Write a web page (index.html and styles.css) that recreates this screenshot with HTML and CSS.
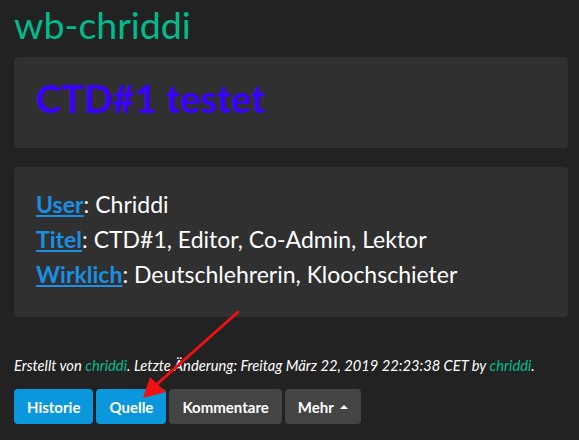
FILE: index.html
```html
<!DOCTYPE html>
<html lang="de">
  <head>
    <meta charset="UTF-8" />
    <meta name="viewport" content="width=device-width, initial-scale=1.0" />
    <title>wb-chriddi</title>
    <link rel="stylesheet" href="styles.css">
  </head>
  <body>
    <div class="page">
      <h2 class="site-title">wb-chriddi</h2>

      <div class="well">
        <h1 class="doc-title">CTD#1 testet</h1>
      </div>

      <div class="well info">
        <p class="line"><a href="#">User</a>: Chriddi</p>
        <p class="line"><a href="#">Titel</a>: CTD#1, Editor, Co-Admin, Lektor</p>
        <p class="line"><a href="#">Wirklich</a>: Deutschlehrerin, Kloochschieter</p>
      </div>

      <p class="meta">Erstellt von <a href="#">chriddi</a>. Letzte Änderung: Freitag März 22, 2019 22:23:38 CET by <a href="#">chriddi</a>.</p>

      <div class="actions">
        <button class="btn btn-info">Historie</button>
        <button class="btn btn-info">Quelle</button>
        <button class="btn btn-dark">Kommentare</button>
        <button class="btn btn-dark">Mehr<span class="caret"></span></button>
      </div>
    </div>

    <!-- roter Pfeil auf "Quelle" -->
    <svg class="arrow" width="579" height="440" viewBox="0 0 579 440">
      <line x1="238" y1="312" x2="156" y2="385" stroke="#f01010" stroke-width="3" stroke-linecap="round" />
      <polygon points="143,398 150,377 166,392" fill="#f01010" />
    </svg>
  </body>
</html>
```

FILE: styles.css
```css
body {
  margin: 0;
  background-color: #222222;
  color: #ffffff;
  font-family: Lato, "Open Sans", sans-serif;
}

.page {
  padding: 0 11px 0 14px;
}

.site-title {
  font-size: 37.5px;
  font-weight: 400;
  color: #00bc8c;
  margin: 0;
  line-height: 49px;
}

.well {
  background-color: #303030;
  border-radius: 4px;
  margin-top: 8px;
  padding: 20px 22px 0;
  height: 91px;
  box-sizing: border-box;
}

.doc-title {
  font-size: 38px;
  font-weight: 700;
  color: #3a00ff;
  margin: 0;
  line-height: 42px;
}

.info {
  margin-top: 19px;
  height: 150px;
  padding: 20px 22px 0;
}

.line {
  margin: 0;
  font-size: 23px;
  line-height: 35px;
}

.line a {
  color: #1a8fe3;
  font-weight: 700;
  text-decoration: underline;
}

.meta {
  font-size: 14.7px;
  font-style: italic;
  margin: 38px 0 0;
  line-height: 20px;
}

.meta a {
  color: #00bc8c;
  text-decoration: none;
}

.actions {
  display: flex;
  gap: 3px;
  margin-top: 14px;
}

.btn {
  font-family: Lato, "Open Sans", sans-serif;
  font-size: 15px;
  font-weight: 700;
  color: #ffffff;
  border: none;
  border-radius: 4px;
  height: 35px;
  padding: 0 13px;
  display: flex;
  align-items: center;
}

.btn-info {
  background-color: #0a97dc;
}

.btn-dark {
  background-color: #444444;
}

.caret {
  display: inline-block;
  width: 0;
  height: 0;
  margin-left: 6px;
  border-left: 4px solid transparent;
  border-right: 4px solid transparent;
  border-bottom: 4px solid #ffffff;
}

.arrow {
  position: absolute;
  top: 0;
  left: 0;
  pointer-events: none;
}
```
